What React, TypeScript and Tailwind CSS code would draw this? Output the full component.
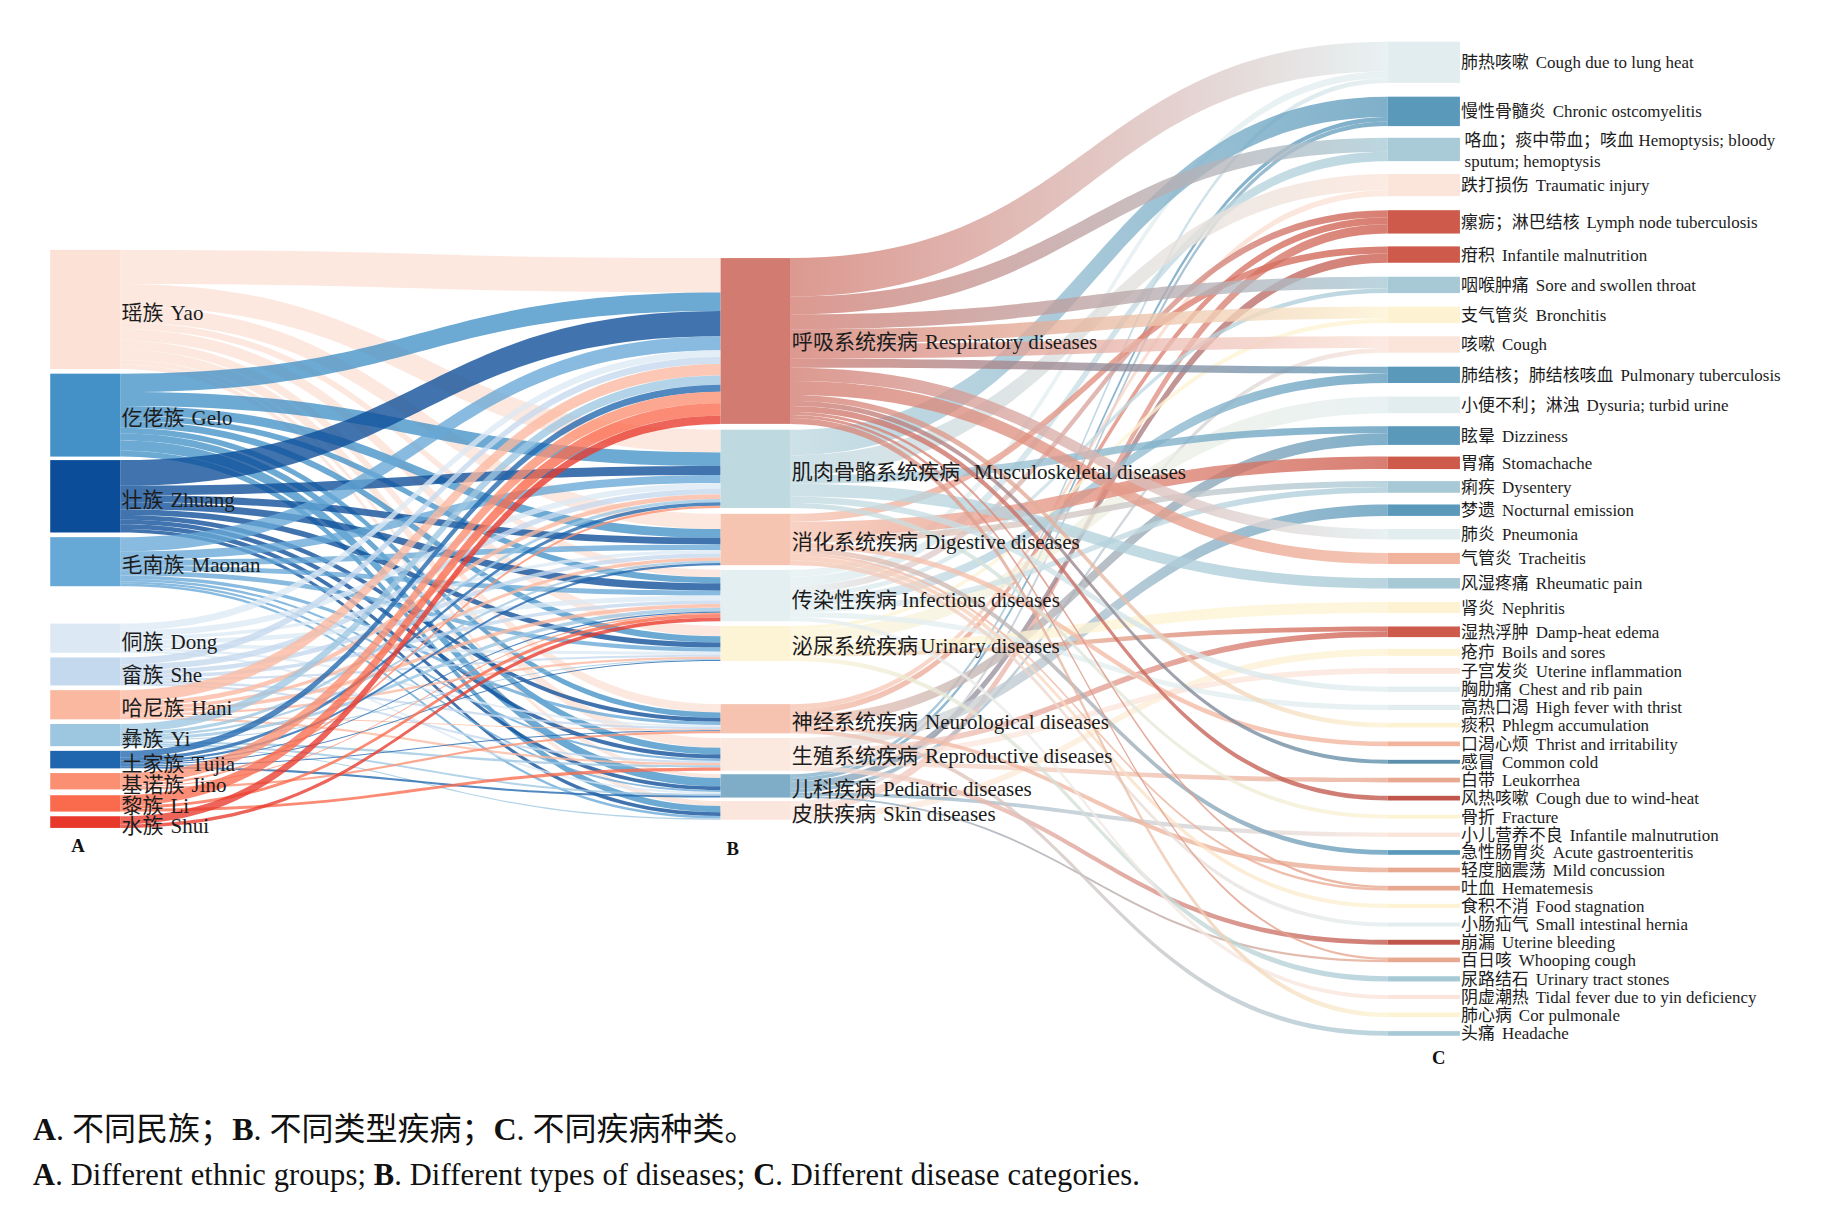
import React from "react";

type Node = { y0: number; y1: number; c: string };
type Link = { s: number; t: number; v: number; sy0: number; sy1: number; ty0: number; ty1: number };

// column x positions (in the 1560-wide drawing space)
const AX = [43, 103];
const BX = [617, 677];
const CX = [1188, 1250];

const groups = [
  { cn: "瑶族", en: "Yao", y0: 214, y1: 316, c: "#fbe1d6", ly: 268 },
  { cn: "仡佬族", en: "Gelo", y0: 320, y1: 391, c: "#4391c7", ly: 358 },
  { cn: "壮族", en: "Zhuang", y0: 394, y1: 456, c: "#0b4d99", ly: 428 },
  { cn: "毛南族", en: "Maonan", y0: 460, y1: 502, c: "#66a8d6", ly: 484 },
  { cn: "侗族", en: "Dong", y0: 534, y1: 559, c: "#dce9f5", ly: 550 },
  { cn: "畲族", en: "She", y0: 563, y1: 587, c: "#c5d9ee", ly: 578 },
  { cn: "哈尼族", en: "Hani", y0: 591, y1: 616, c: "#fbb8a0", ly: 606 },
  { cn: "彝族", en: "Yi", y0: 620, y1: 639, c: "#9dc6e1", ly: 633 },
  { cn: "土家族", en: "Tujia", y0: 643, y1: 658, c: "#2066ae", ly: 654 },
  { cn: "基诺族", en: "Jino", y0: 662, y1: 676, c: "#fb8f72", ly: 672 },
  { cn: "黎族", en: "Li", y0: 681, y1: 695, c: "#fa6a4d", ly: 690 },
  { cn: "水族", en: "Shui", y0: 699, y1: 709, c: "#e8382c", ly: 707 },
];

const types = [
  { cn: "呼吸系统疾病", en: "Respiratory diseases", y0: 221, y1: 363, c: "#d27c71", ly: 293, gap: 6 },
  { cn: "肌肉骨骼系统疾病", en: "Musculoskeletal diseases", y0: 368, y1: 435, c: "#bfd9e1", ly: 404, gap: 12 },
  { cn: "消化系统疾病", en: "Digestive diseases", y0: 440, y1: 484, c: "#f6c5b2", ly: 464, gap: 6 },
  { cn: "传染性疾病", en: "Infectious diseases", y0: 488, y1: 532, c: "#e4eff1", ly: 514, gap: 4 },
  { cn: "泌尿系统疾病", en: "Urinary diseases", y0: 536, y1: 566, c: "#fdf4d6", ly: 553, gap: 2 },
  { cn: "神经系统疾病", en: "Neurological diseases", y0: 603, y1: 628, c: "#f5c3b0", ly: 618, gap: 6 },
  { cn: "生殖系统疾病", en: "Reproductive diseases", y0: 632, y1: 660, c: "#fbe8df", ly: 647, gap: 6 },
  { cn: "儿科疾病", en: "Pediatric diseases", y0: 663, y1: 683, c: "#7fadc8", ly: 676, gap: 6 },
  { cn: "皮肤疾病", en: "Skin diseases", y0: 686, y1: 702, c: "#fbe6dd", ly: 697, gap: 6 },
];

const kinds: { cn: string; en: string; y0: number; y1: number; c: string; src: [number, number][] }[] = [
  { cn: "肺热咳嗽", en: "Cough due to lung heat", y0: 35.7, y1: 71, c: "#e2edef", src: [[0, 26], [3, 6], [7, 4]] },
  { cn: "慢性骨髓炎", en: "Chronic ostcomyelitis", y0: 82.8, y1: 108, c: "#5b99bb", src: [[1, 18], [7, 4], [8, 4]] },
  { cn: "咯血；痰中带血；咳血", en: "Hemoptysis; bloody", y0: 118, y1: 138, c: "#a9cbd7", src: [[0, 12], [3, 8]] },
  { cn: "跌打损伤", en: "Traumatic injury", y0: 149, y1: 168, c: "#fbe5da", src: [[1, 14], [5, 5]] },
  { cn: "瘰疬；淋巴结核", en: "Lymph node tuberculosis", y0: 180, y1: 200, c: "#cd5a4b", src: [[3, 6], [5, 6], [8, 8]] },
  { cn: "疳积", en: "Infantile malnutrition", y0: 211, y1: 225, c: "#cd5a4b", src: [[2, 6], [7, 8]] },
  { cn: "咽喉肿痛", en: "Sore and swollen throat", y0: 237, y1: 251, c: "#a7c9d6", src: [[0, 10], [3, 4]] },
  { cn: "支气管炎", en: "Bronchitis", y0: 262.6, y1: 276.7, c: "#fdf3d2", src: [[0, 10], [4, 4]] },
  { cn: "咳嗽", en: "Cough", y0: 288, y1: 302, c: "#fbe4da", src: [[0, 10], [7, 4]] },
  { cn: "肺结核；肺结核咳血", en: "Pulmonary tuberculosis", y0: 314, y1: 328, c: "#5b99bb", src: [[0, 6], [3, 8]] },
  { cn: "小便不利；淋浊", en: "Dysuria; turbid urine", y0: 339.6, y1: 353.8, c: "#e2edef", src: [[4, 14]] },
  { cn: "眩晕", en: "Dizziness", y0: 365, y1: 381, c: "#5b99bb", src: [[1, 6], [5, 10]] },
  { cn: "胃痛", en: "Stomachache", y0: 391, y1: 401.7, c: "#cd5a4b", src: [[2, 11]] },
  { cn: "痢疾", en: "Dysentery", y0: 412, y1: 422, c: "#a7c9d6", src: [[2, 5], [3, 5]] },
  { cn: "梦遗", en: "Nocturnal emission", y0: 432, y1: 441.8, c: "#5b99bb", src: [[6, 10]] },
  { cn: "肺炎", en: "Pneumonia", y0: 453, y1: 462, c: "#e2edef", src: [[0, 9]] },
  { cn: "气管炎", en: "Tracheitis", y0: 473.5, y1: 483, c: "#f2b39c", src: [[0, 9.5]] },
  { cn: "风湿疼痛", en: "Rheumatic pain", y0: 495, y1: 504, c: "#a7c9d6", src: [[1, 9]] },
  { cn: "肾炎", en: "Nephritis", y0: 515.6, y1: 525, c: "#fdf3d2", src: [[4, 9.5]] },
  { cn: "湿热浮肿", en: "Damp-heat edema", y0: 536.5, y1: 545.6, c: "#cd5a4b", src: [[4, 4], [6, 5]] },
  { cn: "疮疖", en: "Boils and sores", y0: 555.6, y1: 561.6, c: "#fdf3d2", src: [[8, 6]] },
  { cn: "子宫发炎", en: "Uterine inflammation", y0: 572, y1: 577, c: "#fbe4da", src: [[6, 5]] },
  { cn: "胸肋痛", en: "Chest and rib pain", y0: 588, y1: 592.5, c: "#e2edef", src: [[1, 4.5]] },
  { cn: "高热口渴", en: "High fever with thrist", y0: 603.6, y1: 608, c: "#e2edef", src: [[3, 4.5]] },
  { cn: "痰积", en: "Phlegm accumulation", y0: 619, y1: 623, c: "#fdf3d2", src: [[0, 4]] },
  { cn: "口渴心烦", en: "Thrist and irritability", y0: 635, y1: 639, c: "#f2b39c", src: [[2, 4]] },
  { cn: "感冒", en: "Common cold", y0: 650.7, y1: 654, c: "#5b8fab", src: [[0, 3.5]] },
  { cn: "白带", en: "Leukorrhea", y0: 666, y1: 670, c: "#e8a890", src: [[6, 4]] },
  { cn: "风热咳嗽", en: "Cough due to wind-heat", y0: 681.5, y1: 685.5, c: "#c0564a", src: [[0, 4]] },
  { cn: "骨折", en: "Fracture", y0: 697.7, y1: 701, c: "#fdf3d2", src: [[1, 3.5]] },
  { cn: "小儿营养不良", en: "Infantile malnutrution", y0: 713, y1: 716.7, c: "#fbe4da", src: [[7, 3.7]] },
  { cn: "急性肠胃炎", en: "Acute gastroenteritis", y0: 728, y1: 732, c: "#5b99bb", src: [[2, 4]] },
  { cn: "轻度脑震荡", en: "Mild concussion", y0: 743, y1: 747, c: "#e8a890", src: [[5, 4]] },
  { cn: "吐血", en: "Hematemesis", y0: 758.6, y1: 762.6, c: "#e8a890", src: [[0, 2], [2, 2]] },
  { cn: "食积不消", en: "Food stagnation", y0: 774, y1: 777.6, c: "#fdf3d2", src: [[2, 3.6]] },
  { cn: "小肠疝气", en: "Small intestinal hernia", y0: 790, y1: 793.4, c: "#e2edef", src: [[2, 3.4]] },
  { cn: "崩漏", en: "Uterine bleeding", y0: 804.8, y1: 809, c: "#c0564a", src: [[6, 4.2]] },
  { cn: "百日咳", en: "Whooping cough", y0: 820, y1: 824, c: "#e8a890", src: [[0, 2], [7, 2]] },
  { cn: "尿路结石", en: "Urinary tract stones", y0: 836, y1: 840.5, c: "#a7c9d6", src: [[4, 4.5]] },
  { cn: "阴虚潮热", en: "Tidal fever due to yin deficiency", y0: 852, y1: 855.5, c: "#fbe4da", src: [[3, 3.5]] },
  { cn: "肺心病", en: "Cor pulmonale", y0: 867, y1: 871, c: "#fdf3d2", src: [[0, 4]] },
  { cn: "头痛", en: "Headache", y0: 883, y1: 887, c: "#a7c9d6", src: [[5, 4]] },
];

// ethnic group -> disease type values
const AB = [
  [30, 20, 14, 6, 10, 8, 9, 4, 4],
  [16, 12, 8, 5, 6, 5, 6, 9, 5],
  [22, 8, 6, 6, 5, 4, 4, 4, 3],
  [12, 7, 5, 4, 4, 3, 2, 2, 2],
  [6, 5, 3, 4, 3, 2, 0, 2, 0],
  [6, 5, 4, 3, 2, 2, 2, 0, 0],
  [10, 4, 3, 3, 2, 1, 2, 0, 0],
  [8, 3, 2, 3, 1, 0, 2, 2, 1],
  [6, 3, 2, 1, 1, 1, 0, 2, 0],
  [10, 2, 0, 1, 0, 2, 0, 0, 0],
  [11, 0, 0, 3, 0, 0, 3, 0, 0],
  [7, 0, 0, 3, 0, 0, 0, 0, 0],
];

function layout(src: Node[], tgt: Node[], raw: [number, number, number][]): Link[] {
  const out = src.map(() => 0);
  const inn = tgt.map(() => 0);
  const links: Link[] = raw.map(([s, t, v]) => {
    out[s] += v;
    inn[t] += v;
    return { s, t, v, sy0: 0, sy1: 0, ty0: 0, ty1: 0 };
  });
  src.forEach((n, i) => {
    let y = n.y0;
    links
      .filter((l) => l.s === i)
      .sort((a, b) => a.t - b.t)
      .forEach((l) => {
        l.sy0 = y;
        y += (l.v / out[i]) * (n.y1 - n.y0);
        l.sy1 = y;
      });
  });
  tgt.forEach((n, i) => {
    let y = n.y0;
    links
      .filter((l) => l.t === i)
      .sort((a, b) => a.s - b.s)
      .forEach((l) => {
        l.ty0 = y;
        y += (l.v / inn[i]) * (n.y1 - n.y0);
        l.ty1 = y;
      });
  });
  return links;
}

function ribbon(x0: number, x1: number, l: Link) {
  const xm = (x0 + x1) / 2;
  return `M${x0},${l.sy0}C${xm},${l.sy0} ${xm},${l.ty0} ${x1},${l.ty0}L${x1},${l.ty1}C${xm},${l.ty1} ${xm},${l.sy1} ${x0},${l.sy1}Z`;
}

const abRaw: [number, number, number][] = [];
AB.forEach((row, s) => row.forEach((v, t) => v > 0 && abRaw.push([s, t, v])));
const abLinks = layout(groups, types, abRaw);

const bcRaw: [number, number, number][] = [];
kinds.forEach((k, t) => k.src.forEach(([s, v]) => bcRaw.push([s, t, v])));
const bcLinks = layout(types, kinds, bcRaw);

function Sankey() {
  return (
    <svg viewBox="0 0 1560 930" preserveAspectRatio="none" className="block h-[1086px] w-[1822px]">
      <defs>
        {bcLinks.map((l, i) => (
          <linearGradient key={i} id={`bc${i}`} gradientUnits="userSpaceOnUse" x1={BX[1]} y1={0} x2={CX[0]} y2={0}>
            <stop offset="0" stopColor={types[l.s].c} />
            <stop offset="1" stopColor={kinds[l.t].c} />
          </linearGradient>
        ))}
      </defs>

      {/* links A -> B */}
      {abLinks.map((l, i) => (
        <path key={`ab${i}`} d={ribbon(AX[1], BX[0], l)} fill={groups[l.s].c} fillOpacity={0.78} />
      ))}

      {/* links B -> C */}
      {bcLinks.map((l, i) => (
        <path key={`bcl${i}`} d={ribbon(BX[1], CX[0], l)} fill={`url(#bc${i})`} fillOpacity={0.78} />
      ))}

      {/* nodes */}
      {groups.map((n, i) => (
        <rect key={`a${i}`} x={AX[0]} y={n.y0} width={AX[1] - AX[0]} height={n.y1 - n.y0} fill={n.c} />
      ))}
      {types.map((n, i) => (
        <rect key={`b${i}`} x={BX[0]} y={n.y0} width={BX[1] - BX[0]} height={n.y1 - n.y0} fill={n.c} />
      ))}
      {kinds.map((n, i) => (
        <rect key={`c${i}`} x={CX[0]} y={n.y0} width={CX[1] - CX[0]} height={n.y1 - n.y0} fill={n.c} />
      ))}

      {/* labels */}
      <g fill="#1c1c1c" fontSize={18}>
        {groups.map((n, i) => (
          <text key={`ta${i}`} x={AX[1] + 1} y={n.ly} dominantBaseline="central">
            <tspan>{n.cn}</tspan>
            <tspan dx={6}>{n.en}</tspan>
          </text>
        ))}
        {types.map((n, i) => (
          <text key={`tb${i}`} x={BX[1] + 1} y={n.ly} dominantBaseline="central">
            <tspan>{n.cn}</tspan>
            <tspan dx={n.gap}>{n.en}</tspan>
          </text>
        ))}
      </g>
      <g fill="#1c1c1c" fontSize={14.5}>
        {kinds.map((n, i) =>
          i === 2 ? (
            <g key={`tc${i}`}>
              <text x={CX[1] + 4} y={120} dominantBaseline="central">
                <tspan>{n.cn}</tspan>
                <tspan dx={4}>{n.en}</tspan>
              </text>
              <text x={CX[1] + 4} y={138} dominantBaseline="central">
                sputum; hemoptysis
              </text>
            </g>
          ) : (
            <text key={`tc${i}`} x={CX[1] + 1} y={(n.y0 + n.y1) / 2} dominantBaseline="central">
              <tspan>{n.cn}</tspan>
              <tspan dx={6}>{n.en}</tspan>
            </text>
          )
        )}
      </g>

      {/* panel letters */}
      <g fill="#111" fontSize={16} fontWeight={700}>
        <text x={61} y={724} dominantBaseline="central">A</text>
        <text x={622} y={727} dominantBaseline="central">B</text>
        <text x={1226} y={906} dominantBaseline="central">C</text>
      </g>
    </svg>
  );
}

export default function App() {
  return (
    <div className="h-[1217px] w-[1822px] overflow-hidden bg-white font-['Liberation_Serif','Noto_Sans_CJK_SC',serif] text-[#111]">
      <Sankey />

      {/* Caption */}
      <div className="pl-[33px] pt-[20px] leading-[46px]">
        <p className="text-[32px]">
          <b>A</b>. 不同民族；<b>B</b>. 不同类型疾病；<b>C</b>. 不同疾病种类。
        </p>
        <p className="text-[30.5px] tracking-[0.12px]">
          <b>A</b>. Different ethnic groups; <b>B</b>. Different types of diseases; <b>C</b>. Different disease
          categories.
        </p>
      </div>
    </div>
  );
}
